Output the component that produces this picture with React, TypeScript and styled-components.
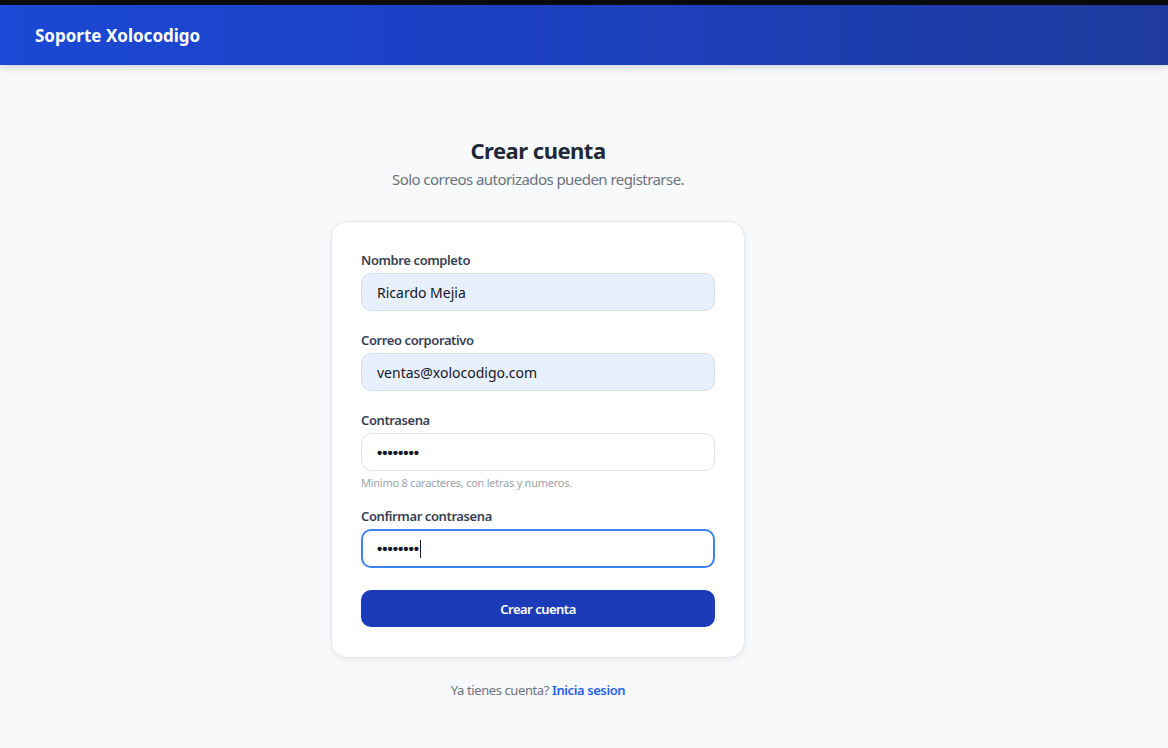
import styled, { createGlobalStyle, css } from "styled-components";

const GlobalStyle = createGlobalStyle`
  html, body {
    margin: 0;
    padding: 0;
    background: #f8f9fb;
    font-family: "Segoe UI", "Noto Sans", "Open Sans", sans-serif;
    color: #1f2937;
  }
  * {
    box-sizing: border-box;
  }
`;

const Page = styled.div`
  min-height: 748px;
  display: flex;
  flex-direction: column;
`;

const TopStrip = styled.div`
  height: 5px;
  background: #0b0b0b;
`;

const Header = styled.header`
  height: 60px;
  display: flex;
  align-items: center;
  padding: 0 35px;
  background: linear-gradient(90deg, #1b48d4 0%, #1c40c2 45%, #1e3a9c 100%);
  box-shadow: 0 2px 8px rgba(15, 23, 42, 0.18);
`;

const Brand = styled.h1`
  margin: 0;
  font-size: 17px;
  font-weight: 700;
  color: #ffffff;
`;

const Main = styled.main`
  display: flex;
  flex-direction: column;
  align-items: center;
  padding: 70px 92px 0 0;
`;

const Title = styled.h2`
  margin: 0;
  font-size: 22px;
  letter-spacing: -0.5px;
  font-weight: 700;
  color: #1f2937;
  line-height: 30px;
`;

const Subtitle = styled.p`
  margin: 0;
  margin-top: 4px;
  font-size: 15px;
  letter-spacing: -0.55px;
  color: #6b7280;
  line-height: 20px;
`;

const Card = styled.form`
  margin-top: 32px;
  width: 414px;
  background: #ffffff;
  border: 1px solid #e5e7eb;
  border-radius: 16px;
  box-shadow: 0 2px 6px rgba(15, 23, 42, 0.06);
  padding: 29px 29px 30px;
  display: flex;
  flex-direction: column;
`;

const Field = styled.div<{ $tight?: boolean }>`
  display: flex;
  flex-direction: column;
  margin-bottom: ${(p) => (p.$tight ? "17px" : "20px")};
`;

const Label = styled.label`
  font-size: 13px;
  letter-spacing: -0.4px;
  font-weight: 600;
  color: #374151;
  line-height: 18px;
  margin-bottom: 4px;
`;

const Input = styled.div<{ $filled?: boolean; $focused?: boolean }>`
  height: 38px;
  border-radius: 10px;
  border: 1px solid #dfe3ea;
  background: #ffffff;
  display: flex;
  align-items: center;
  padding: 0 15px;
  font-size: 14px;
  color: #111827;
  ${(p) =>
    p.$filled &&
    css`
      background: #e8f0fe;
      border-color: #d4dcea;
    `}
  ${(p) =>
    p.$focused &&
    css`
      height: 39px;
      border: 2px solid #3b82f6;
      padding: 0 14px;
    `}
`;

const Dots = styled.span`
  font-family: "Liberation Sans", sans-serif;
  font-size: 15px;
  font-weight: 700;
  letter-spacing: 0;
`;

const Caret = styled.span`
  display: inline-block;
  width: 1px;
  height: 18px;
  background: #111827;
  margin-left: 1px;
`;

const Hint = styled.span`
  margin-top: 5px;
  font-size: 11px;
  letter-spacing: -0.25px;
  color: #9ca3af;
  line-height: 14px;
`;

const Button = styled.button`
  margin-top: 2px;
  height: 37px;
  border: none;
  border-radius: 10px;
  background: #1c3bb8;
  color: #ffffff;
  font-family: inherit;
  font-size: 13px;
  letter-spacing: -0.5px;
  font-weight: 600;
  cursor: pointer;
`;

const Footer = styled.p`
  margin: 23px 0 0;
  font-size: 13px;
  letter-spacing: -0.4px;
  color: #6b7280;
`;

const Link = styled.a`
  color: #2563eb;
  font-weight: 600;
  text-decoration: none;
`;

const App = () => {
  return (
    <Page>
      <GlobalStyle />
      <TopStrip />
      <Header>
        <Brand>Soporte Xolocodigo</Brand>
      </Header>
      <Main>
        <Title>Crear cuenta</Title>
        <Subtitle>Solo correos autorizados pueden registrarse.</Subtitle>
        <Card onSubmit={(e) => e.preventDefault()}>
          <Field>
            <Label>Nombre completo</Label>
            <Input $filled>Ricardo Mejia</Input>
          </Field>
          <Field>
            <Label>Correo corporativo</Label>
            <Input $filled>ventas@xolocodigo.com</Input>
          </Field>
          <Field $tight>
            <Label>Contrasena</Label>
            <Input>
              <Dots>••••••••</Dots>
            </Input>
            <Hint>Minimo 8 caracteres, con letras y numeros.</Hint>
          </Field>
          <Field>
            <Label>Confirmar contrasena</Label>
            <Input $focused>
              <Dots>••••••••</Dots>
              <Caret />
            </Input>
          </Field>
          <Button type="submit">Crear cuenta</Button>
        </Card>
        <Footer>
          Ya tienes cuenta? <Link href="#">Inicia sesion</Link>
        </Footer>
      </Main>
    </Page>
  );
};

export default App;
